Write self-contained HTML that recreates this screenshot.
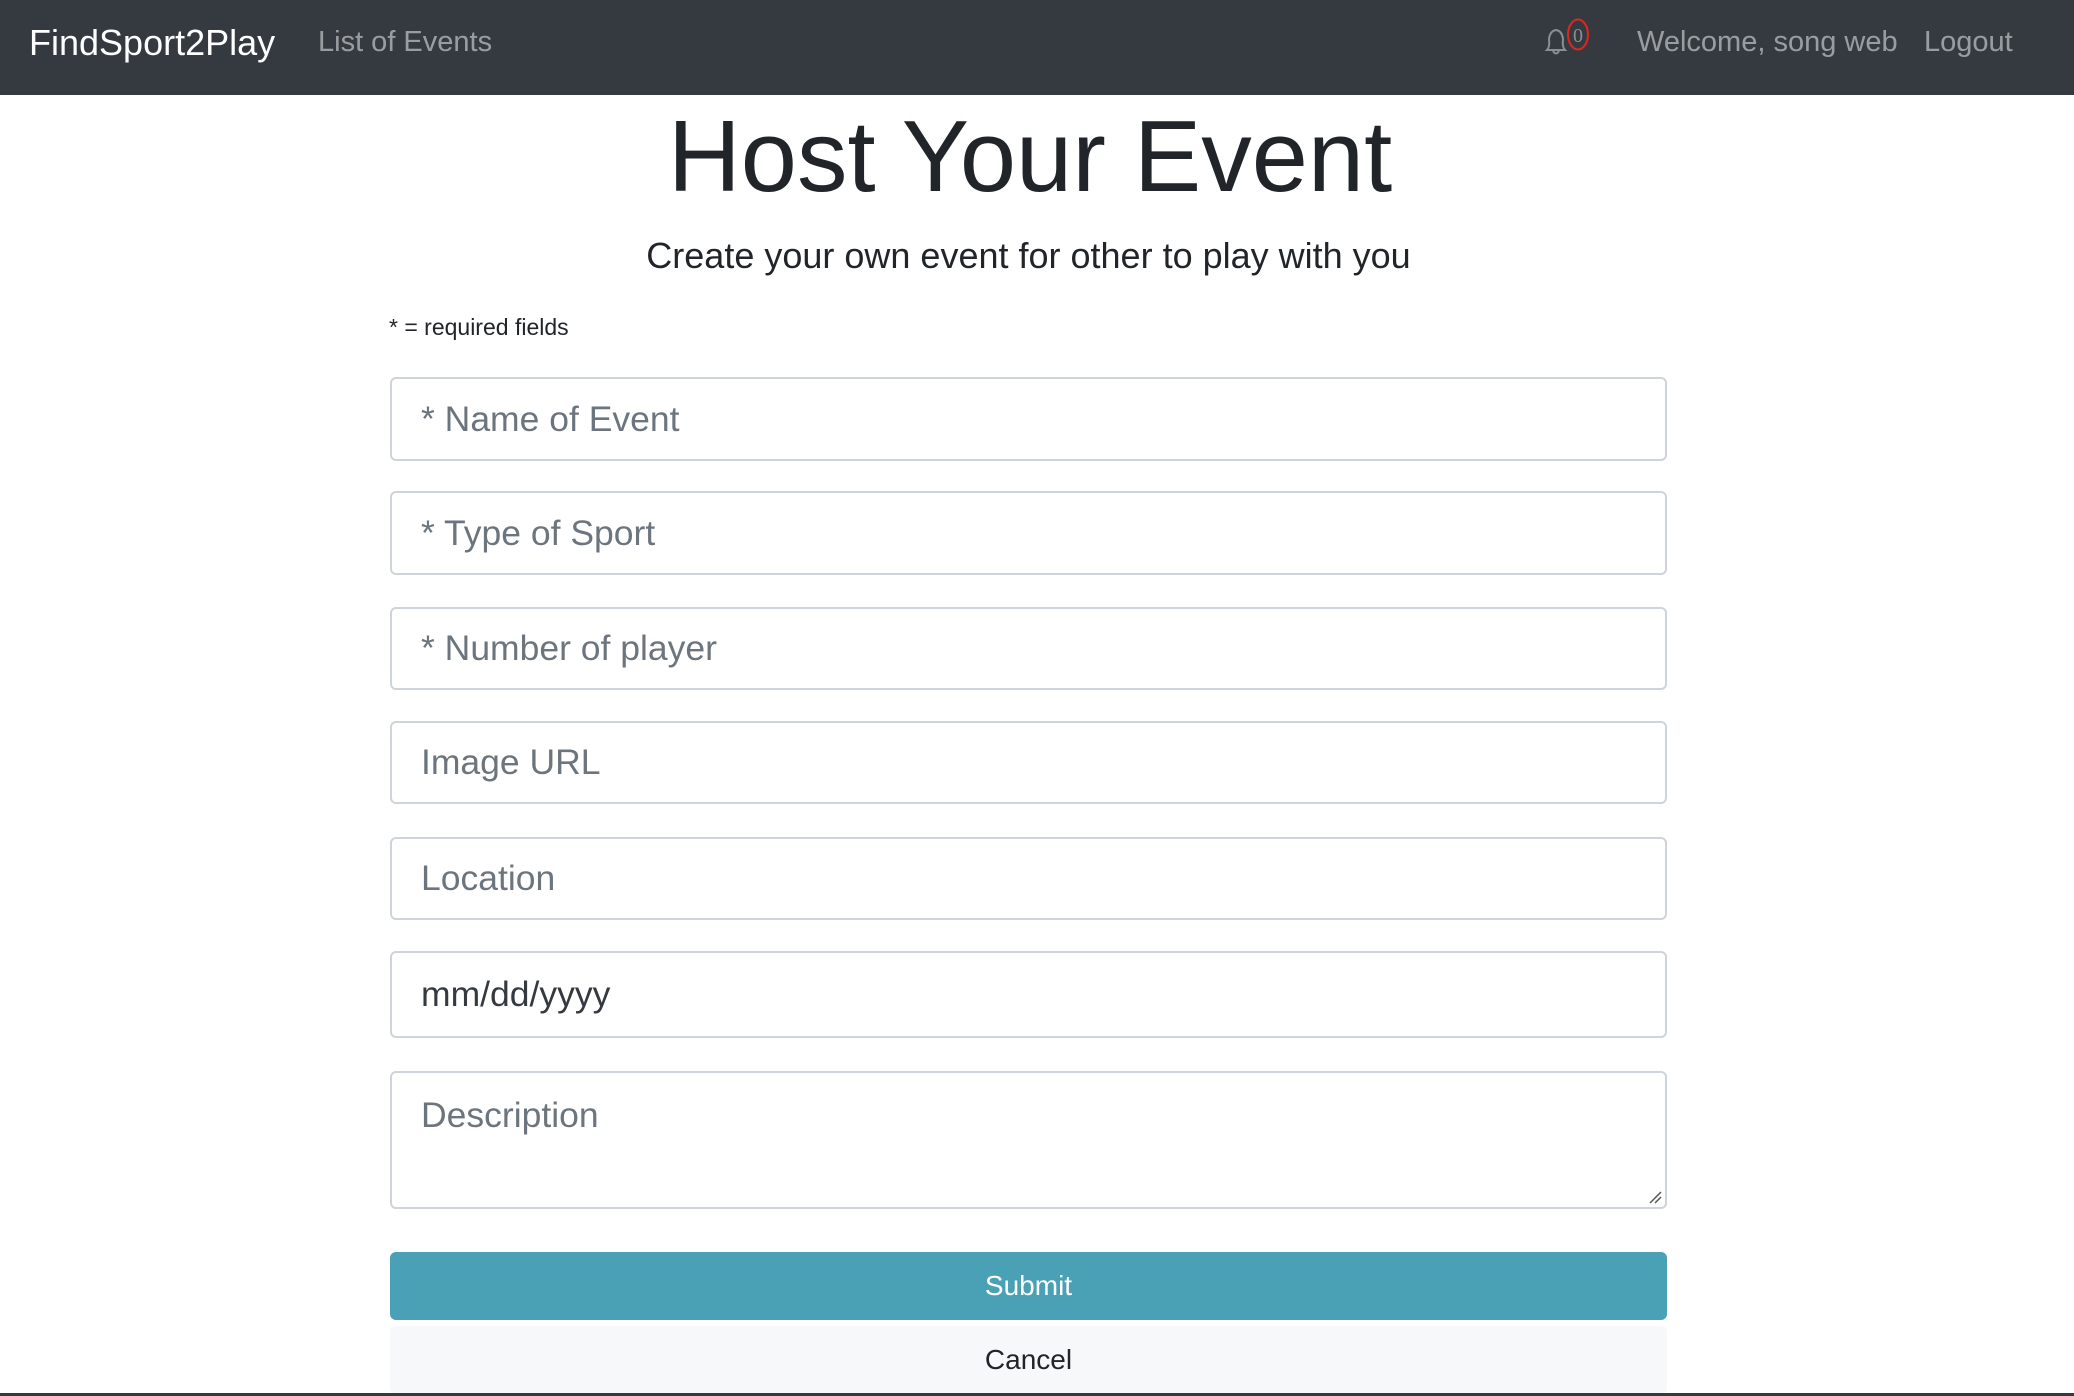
<!DOCTYPE html>
<html><head><meta charset="utf-8"><style>
*{box-sizing:border-box;margin:0;padding:0}
body{width:2074px;height:1396px;overflow:hidden;background:#fff;font-family:"Liberation Sans",Arial,sans-serif;color:#212529;position:relative}
.nav{position:absolute;left:0;top:0;width:2074px;height:95px;background:#343a40}
.nav span{position:absolute;white-space:nowrap}
.brand{left:29px;top:22px;font-size:36px;color:#fff}
.link{color:rgba(255,255,255,.5);font-size:29px;top:26px}
h1{position:absolute;left:0;width:2060px;text-align:center;top:97px;font-size:101px;font-weight:300;line-height:120px}
.sub{position:absolute;left:0;width:2057px;text-align:center;top:235px;font-size:36px;font-weight:300}
.req{position:absolute;left:389px;top:314px;font-size:23px}
.f{position:absolute;left:390px;width:1277px;border:2px solid #ced4da;border-radius:6px;font-size:35.5px;color:#6c757d;padding-left:29px;display:flex;align-items:center}
.btn{position:absolute;left:390px;width:1277px;border-radius:6px;font-size:28px;display:flex;align-items:center;justify-content:center}
</style></head><body>
<div class="nav">
<span class="brand">FindSport2Play</span>
<span class="link" style="left:318px">List of Events</span>
<svg style="position:absolute;left:1542px;top:26px" width="28" height="32" viewBox="0 0 28 32"><path d="M5 24 Q8 21 7 13 Q8 5 14 4 Q20 5 21 13 Q20 21 23 24 Z M11 25 Q14 30 17 25" fill="none" stroke="#8c8f92" stroke-width="2"/></svg>
<svg style="position:absolute;left:1566px;top:17px" width="24" height="35"><ellipse cx="12" cy="17.5" rx="10" ry="15" fill="none" stroke="#e0261f" stroke-width="2"/><text x="12" y="25" text-anchor="middle" font-family="Liberation Serif,serif" font-size="20" fill="#8c8f92">0</text></svg>
<span class="link" style="left:1637px">Welcome, song web</span>
<span class="link" style="left:1924px">Logout</span>
</div>
<h1>Host Your Event</h1>
<div class="sub">Create your own event for other to play with you</div>
<div class="req">* = required fields</div>
<div class="f" style="top:377px;height:84px">* Name of Event</div>
<div class="f" style="top:491px;height:84px">* Type of Sport</div>
<div class="f" style="top:607px;height:83px">* Number of player</div>
<div class="f" style="top:721px;height:83px">Image URL</div>
<div class="f" style="top:837px;height:83px">Location</div>
<div class="f" style="top:951px;height:87px;color:#343a40">mm/dd/yyyy</div>
<div class="f" style="top:1071px;height:138px;align-items:flex-start;padding-top:22px">Description
<svg style="position:absolute;right:3px;bottom:3px" width="14" height="14"><path d="M2 13 L13 2 M7 13 L13 7" stroke="#555" stroke-width="1.5"/></svg></div>
<div class="btn" style="top:1252px;height:68px;background:#4aa0b5;color:#fff">Submit</div>
<div class="btn" style="top:1326px;height:68px;background:#f7f8fa;color:#212529">Cancel</div>
<div style="position:absolute;left:0;top:1393px;width:2074px;height:3px;background:#343a40"></div>
</body></html>
